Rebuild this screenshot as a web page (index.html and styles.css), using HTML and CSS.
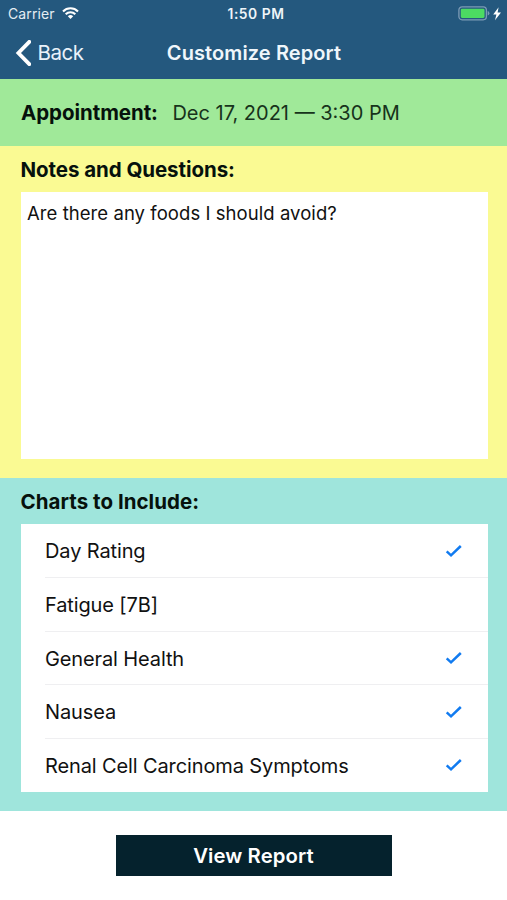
FILE: index.html
```html
<!DOCTYPE html>
<html lang="en">
<head>
<meta charset="utf-8">
<title>Customize Report</title>
<link rel="stylesheet" href="styles.css">
</head>
<body>
<header class="header">
  <div class="status">
    <div class="carrier"><span class="carrier-name">Carrier</span>
      <svg class="wifi" viewBox="0 0 17 12" width="17" height="12"><g fill="none" stroke="#fff" stroke-width="2.1"><path d="M1 4.4a10.6 10.6 0 0 1 15 0"/><path d="M3.7 7.2a6.8 6.8 0 0 1 9.6 0"/></g><path d="M5.8 9.3a3.8 3.8 0 0 1 5.4 0L8.5 12z" fill="#fff"/></svg>
    </div>
    <span class="time">1:50 PM</span>
    <div class="power">
      <svg viewBox="0 0 44 16" width="44" height="16"><rect x=".9" y=".8" width="27.5" height="13" rx="3.2" fill="none" stroke="#7c9bb5" stroke-width="1.3"/><rect x="2.8" y="2.7" width="23.7" height="9.2" rx="1.3" fill="#4cdb62"/><path d="M29.7 5.1q1.7.5 1.7 2.2t-1.7 2.2z" fill="#7c9bb5"/><path d="M40.6 1.2 35.2 8.4h3.2L37 14.2l6-7.6h-3.4z" fill="#fff"/></svg>
    </div>
  </div>
  <nav class="nav">
    <a class="back"><svg viewBox="0 0 16 26" width="16" height="26"><path d="M14.3 1.8 3.4 13 14.3 24.2" fill="none" stroke="#fff" stroke-width="3.8" stroke-linecap="round" stroke-linejoin="miter"/></svg><span class="back-label">Back</span></a>
    <h1 class="title">Customize Report</h1>
  </nav>
</header>
<section class="appointment"><h2 class="heading appt-label">Appointment:</h2><span class="appt-date">Dec 17, 2021 — 3:30 PM</span></section>
<section class="notes">
  <h2 class="heading notes-heading">Notes and Questions:</h2>
  <div class="note"><span class="note-text">Are there any foods I should avoid?</span></div>
</section>
<section class="charts">
  <h2 class="heading charts-heading">Charts to Include:</h2>
  <ul class="list">
    <li class="row"><span>Day Rating</span><svg class="check" viewBox="0 0 18 14"><path d="M1.7 7.3 6 11.3 15.8 2"/></svg></li>
    <li class="row"><span>Fatigue [7B]</span></li>
    <li class="row"><span>General Health</span><svg class="check" viewBox="0 0 18 14"><path d="M1.7 7.3 6 11.3 15.8 2"/></svg></li>
    <li class="row"><span>Nausea</span><svg class="check" viewBox="0 0 18 14"><path d="M1.7 7.3 6 11.3 15.8 2"/></svg></li>
    <li class="row"><span>Renal Cell Carcinoma Symptoms</span><svg class="check" viewBox="0 0 18 14"><path d="M1.7 7.3 6 11.3 15.8 2"/></svg></li>
  </ul>
</section>
<footer class="footer"><button class="view">View Report</button></footer>
</body>
</html>
```
FILE: styles.css
```css
* { box-sizing: border-box; }
body { margin: 0; background: #fff; color: #111; font-family: Inter, "Liberation Sans", sans-serif; font-size: 20px; height: 900px; overflow: hidden; white-space: nowrap; }
h1, h2, ul { margin: 0; padding: 0; }
svg { display: block; flex: none; }
.header { height: 79.3px; background: #24587e; color: #fff; }
.status { height: 27px; display: grid; grid-template-columns: 1fr auto 1fr; align-items: center; padding: 0 5px 0 8px; font-size: 14px; }
.carrier { display: flex; align-items: center; gap: 7px; color: #e4edf3; letter-spacing: .1px; }
.wifi { margin-top: -1px; }
.time { font-weight: 600; font-size: 13.8px; letter-spacing: .55px; color: #eef4f8; padding-left: 2px; }
.power { display: flex; justify-content: flex-end; }
.nav { height: 52px; display: grid; grid-template-columns: 1fr auto 1fr; align-items: center; padding: 0 15px; }
.back { display: flex; align-items: center; gap: 6.5px; color: #e9f2fa; font-size: 20.5px; letter-spacing: -.5px; }
.back-label { padding-bottom: 2px; }
.title { font-size: 20px; font-weight: 600; letter-spacing: .1px; color: #eff6fb; padding-left: 1px; }
.heading { font-size: 20.5px; font-weight: 700; color: #06110c; line-height: 26px; letter-spacing: -.06px; }
.charts-heading { letter-spacing: .04px; }
.appointment { height: 67px; background: #a0e999; display: flex; align-items: center; gap: 14.5px; padding: 1px 0 0 21px; }
.appt-date { color: #17331b; }
.notes { height: 332px; background: #fafa93; padding: 11px 19.5px 0 20.5px; }
.note { margin-top: 8.5px; height: 267.5px; background: #fff; padding: 8px 6.5px; font-size: 18.5px; line-height: 27px; letter-spacing: .06px; }
.charts { height: 332.5px; background: #9fe5dc; padding: 10.5px 19.5px 0 20.5px; }
.list { margin-top: 9.5px; height: 267.5px; background: #fff; list-style: none; padding-left: 24.5px; display: flex; flex-direction: column; }
.row { flex: none; height: 53.7px; display: flex; align-items: center; justify-content: space-between; padding: 1px 25px 0 0; border-bottom: 1.5px solid #efeff1; letter-spacing: -.12px; }
.row:last-child { height: 52.7px; border-bottom: 0; }
.check { width: 18px; height: 14px; margin-top: -1px; fill: none; stroke: #117bf0; stroke-width: 2.5; }
.footer { padding-top: 24.5px; display: flex; justify-content: center; }
.view { width: 276px; height: 40.5px; background: #05222d; color: #fff; border: 0; border-radius: 0; font: 600 20.3px Inter, "Liberation Sans", sans-serif; letter-spacing: .1px; }
```
